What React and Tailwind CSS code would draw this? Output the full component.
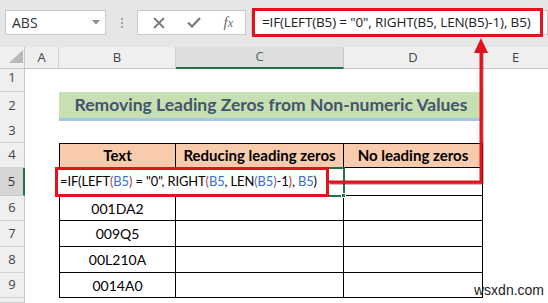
import React from "react";

const COLS = "grid grid-cols-[25px_34px_117px_168px_139px_65px]";

function RowHead({ n, sel }) {
  return (
    <div
      className={
        sel
          ? "flex items-center justify-center bg-[#d6d6d6] border-b border-[#c6c6c6] border-r-2 border-r-[#217346] text-[13px] text-[#333] font-['Open_Sans']"
          : "flex items-center justify-center bg-[#efefef] border-b border-[#d4d4d4] border-r border-r-[#c6c6c6] text-[13px] text-[#444] font-['Open_Sans']"
      }
    >
      {n}
    </div>
  );
}

function Row({ n, h, sel, children }) {
  return (
    <div className={`${COLS} ${h}`}>
      <RowHead n={n} sel={sel} />
      {children}
    </div>
  );
}

const B = "text-[#3a6fc4]";
const P1 = "text-[#b0433f]";
const P2 = "text-[#7d5aa6]";

export default function App() {
  return (
    <div className="relative w-[548px] h-[303px] overflow-hidden bg-white font-['Lato',sans-serif]">
      {/* Toolbar */}
      <div className="h-[47px] bg-[#e6e6e6] flex items-start pt-[10px] pl-[5px]">
        <div className="w-[101px] h-[25px] bg-white border border-[#c9c9c9] flex items-center justify-between pl-[6px] pr-[5px]">
          <span className="text-[14px] text-[#333] font-['Open_Sans']">ABS</span>
          <svg width="8" height="5" viewBox="0 0 8 5">
            <polygon points="0,0 8,0 4,4.5" fill="#8a8a8a" />
          </svg>
        </div>
        <div className="w-[31px] h-[25px] flex flex-col items-center justify-center gap-[2px]">
          <div className="w-[2px] h-[2px] bg-[#a0a0a0]" />
          <div className="w-[2px] h-[2px] bg-[#a0a0a0]" />
          <div className="w-[2px] h-[2px] bg-[#a0a0a0]" />
        </div>
        <div className="w-[109px] h-[25px] bg-white border border-[#c9c9c9] flex items-center justify-between pl-[15px] pr-[12px]">
          <svg width="12" height="12" viewBox="0 0 12 12">
            <path d="M1 1 L11 11 M11 1 L1 11" stroke="#7a7a7a" strokeWidth="1.8" />
          </svg>
          <svg width="14" height="11" viewBox="0 0 14 11">
            <path d="M1 5.5 L5 9.5 L13 1" stroke="#7a7a7a" strokeWidth="2.2" fill="none" />
          </svg>
          <span className="text-[15px] italic text-[#6a6a6a] font-['Liberation_Serif',serif] leading-none">
            f<span className="text-[12px]">x</span>
          </span>
        </div>
        <div className="ml-[5px] flex-1 h-[25px] bg-white border border-[#c9c9c9] flex items-center pl-[10px]">
          <span className="text-[13.5px] text-[#222] font-['Open_Sans'] whitespace-pre tracking-[-0.15px]">
            =IF(LEFT(B5) = "0", RIGHT(B5, LEN(B5)-1), B5)
          </span>
        </div>
      </div>

      {/* Column headers */}
      <div className={`${COLS} h-[18px] font-['Open_Sans'] text-[13px] text-[#444]`}>
        <div className="relative bg-[#efefef] border-r border-[#c6c6c6] border-b border-b-[#c6c6c6]">
          <svg className="absolute left-[9px] top-[3px]" width="14" height="13" viewBox="0 0 14 13">
            <polygon points="0,13 14,13 14,0" fill="#b8b8b8" />
          </svg>
        </div>
        <div className="bg-[#efefef] border-r border-[#d0d0d0] border-b border-b-[#c6c6c6] flex items-center justify-center">A</div>
        <div className="bg-[#efefef] border-r border-[#d0d0d0] border-b border-b-[#c6c6c6] flex items-center justify-center">B</div>
        <div className="bg-[#dedede] border-r border-[#c6c6c6] border-b-2 border-b-[#217346] flex items-center justify-center text-[#3d6a50]">C</div>
        <div className="bg-[#efefef] border-r border-[#d0d0d0] border-b border-b-[#c6c6c6] flex items-center justify-center">D</div>
        <div className="bg-[#efefef] border-b border-b-[#c6c6c6] flex items-center justify-center">E</div>
      </div>

      {/* Rows */}
      <Row n="1" h="h-[27px]">
        <div /><div /><div /><div /><div />
      </Row>
      <Row n="2" h="h-[27px]">
        <div />
        <div className="col-span-3 bg-[#c6e0b4] border-b-[3px] border-[#a4c6e6] flex items-center justify-center text-[17.5px] font-bold text-[#44546a]">
          Removing Leading Zeros from Non-numeric Values
        </div>
        <div />
      </Row>
      <Row n="3" h="h-[24px]">
        <div /><div /><div /><div /><div />
      </Row>
      <Row n="4" h="h-[25px]">
        <div />
        <div className="bg-[#f8cbad] border border-black flex items-center justify-center text-[15px] font-bold text-black">Text</div>
        <div className="bg-[#f8cbad] border-t border-b border-r border-black flex items-center justify-center text-[15px] font-bold text-black">Reducing leading zeros</div>
        <div className="bg-[#f8cbad] border-t border-b border-r border-black flex items-center justify-center text-[15px] font-bold text-black">No leading zeros</div>
        <div />
      </Row>
      <Row n="5" h="h-[28px]" sel>
        <div />
        <div className="border-l border-b border-r border-black" />
        <div className="border-b border-r border-black" />
        <div className="border-b border-r border-black" />
        <div />
      </Row>
      {[
        ["6", "001DA2", "h-[25px]"],
        ["7", "009Q5", "h-[26px]"],
        ["8", "00L210A", "h-[26px]"],
        ["9", "0014A0", "h-[25px]"],
      ].map(([n, t, h]) => (
        <Row key={n} n={n} h={h}>
          <div />
          <div className="border-l border-b border-r border-black flex items-center justify-center text-[14px] text-black">{t}</div>
          <div className="border-b border-r border-black" />
          <div className="border-b border-r border-black" />
          <div />
        </Row>
      ))}
      <Row n="" h="h-[5px]">
        <div /><div /><div /><div /><div />
      </Row>

      {/* C5 selection */}
      <div className="absolute left-[175px] top-[167px] w-[170px] h-[30px] border-2 border-[#217346]" />
      <div className="absolute left-[341px] top-[193px] w-[5px] h-[5px] bg-[#217346] border border-white" />

      {/* In-cell editor with red annotation box */}
      <div className="absolute left-[55px] top-[167px] w-[274px] h-[30px] bg-white border-[3px] border-[#e3131b] flex items-center pl-[2px] overflow-hidden">
        <span className="text-[12.9px] text-black whitespace-pre tracking-[-0.1px]">
          =IF<span>(</span>LEFT<span className={P1}>(</span><span className={B}>B5</span><span className={P1}>)</span> = "0", RIGHT<span className={P1}>(</span><span className={B}>B5</span>, LEN<span className={P2}>(</span><span className={B}>B5</span><span className={P2}>)</span>-1<span className={P1}>)</span>, <span className={B}>B5</span>)
        </span>
      </div>

      {/* Formula bar red annotation box */}
      <div className="absolute left-[252px] top-[8px] w-[291px] h-[29px] border-[3px] border-[#e3131b]" />

      {/* Arrow */}
      <svg className="absolute left-0 top-0 pointer-events-none" width="548" height="303" viewBox="0 0 548 303">
        <path d="M330 183 H482 V53" stroke="#8a0b0b" strokeWidth="3" fill="none" opacity="0.6" />
        <path d="M329 182 H481 V52" stroke="#e3131b" strokeWidth="3" fill="none" />
        <polygon points="474,53 488,53 481,38" fill="#e3131b" />
      </svg>

      {/* Watermark */}
      <div className="absolute left-[474px] top-[283px] text-[14px] text-[#222] font-['Liberation_Sans',sans-serif] leading-none">
        wsxdn.com
      </div>
    </div>
  );
}
